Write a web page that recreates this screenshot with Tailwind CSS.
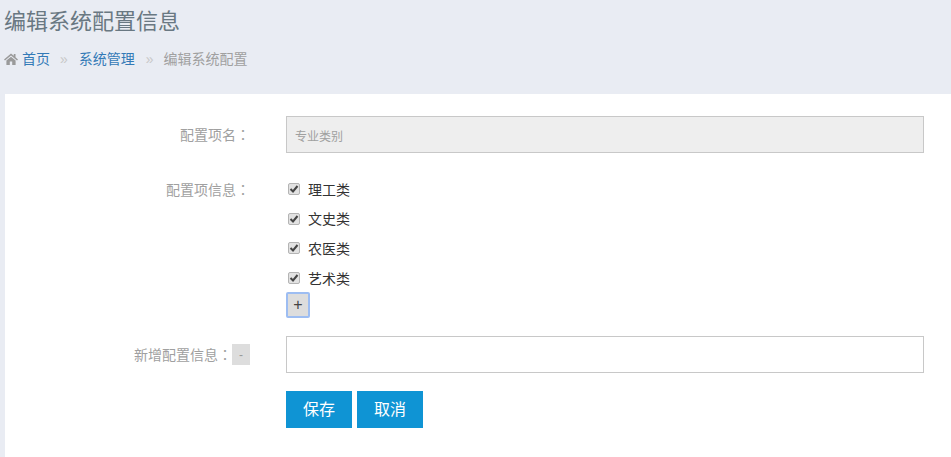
<!DOCTYPE html>
<html lang="zh-CN">
<head>
  <meta charset="UTF-8" />
  <title>编辑系统配置信息</title>
  <script src="https://cdn.jsdelivr.net/npm/@tailwindcss/browser@4"></script>
</head>
<body class="bg-[#e9ecf3] h-[457px] overflow-hidden font-['Liberation_Sans','Noto_Sans_CJK_SC',sans-serif] text-[14px]">
  <!-- Page header -->
  <div class="h-[94px] pl-[4px]">
    <h1 class="pt-[9px] text-[22px] leading-[26px] text-[#697882] font-normal">编辑系统配置信息</h1>
    <div class="flex items-center mt-[14px] h-[20px] leading-[20px]">
      <svg class="w-[14px] h-[12px] mr-[4px]" viewBox="0 0 14 12" fill="#9a9a9a"><path d="M7 0.5 L0 6.5 L1 7.5 L7 2.5 L13 7.5 L14 6.5 L11.5 4.3 V1 H9.8 V2.8 Z M2.4 7.5 V12 H5.8 V8.5 H8.2 V12 H11.6 V7.5 L7 3.7 Z"/></svg>
      <a href="#" class="text-[#337ab7]">首页</a>
      <span class="text-[#c8c8c8] ml-[10px] mr-[11px]">»</span>
      <a href="#" class="text-[#337ab7]">系统管理</a>
      <span class="text-[#c8c8c8] ml-[11px] mr-[10px]">»</span>
      <span class="text-[#a0a0a0]">编辑系统配置</span>
    </div>
  </div>
  <!-- Form card -->
  <div class="ml-[5px] bg-white h-[363px] pt-[22px]">
    <form>
      <div class="flex items-center">
        <label class="w-[245px] text-right text-[#a0a0a0]">配置项名<span lang="zh-TW" class="font-['Noto_Sans_CJK_TC']">：</span></label>
        <input type="text" disabled value="专业类别" class="ml-[36px] w-[638px] h-[37px] px-[8px] pt-[2px] text-[12px] bg-[#eeeeee] border border-[#c8c8c8] text-[#a0a0a0]" />
      </div>
      <div class="flex mt-[22px]">
        <label class="w-[245px] text-right text-[#a0a0a0] leading-[28px]">配置项信息<span lang="zh-TW" class="font-['Noto_Sans_CJK_TC']">：</span></label>
        <div class="ml-[36px]">
          <label class="flex items-center h-[29.6px] pl-[2px] text-[#333333]">
            <span class="flex items-center justify-center w-[12px] h-[12px] -mt-[1px] bg-[#e2e2e2] border border-[#b4b4b4] rounded-[2px]">
              <svg class="w-[10px] h-[10px]" viewBox="0 0 10 10" fill="none" stroke="#444444" stroke-width="2"><path d="M1.5 5 L4 7.5 L8.5 2"/></svg>
            </span>
            <span class="ml-[8px] pt-[1px]">理工类</span>
          </label>
          <label class="flex items-center h-[29.6px] pl-[2px] text-[#333333]">
            <span class="flex items-center justify-center w-[12px] h-[12px] -mt-[1px] bg-[#e2e2e2] border border-[#b4b4b4] rounded-[2px]">
              <svg class="w-[10px] h-[10px]" viewBox="0 0 10 10" fill="none" stroke="#444444" stroke-width="2"><path d="M1.5 5 L4 7.5 L8.5 2"/></svg>
            </span>
            <span class="ml-[8px] pt-[1px]">文史类</span>
          </label>
          <label class="flex items-center h-[29.6px] pl-[2px] text-[#333333]">
            <span class="flex items-center justify-center w-[12px] h-[12px] -mt-[1px] bg-[#e2e2e2] border border-[#b4b4b4] rounded-[2px]">
              <svg class="w-[10px] h-[10px]" viewBox="0 0 10 10" fill="none" stroke="#444444" stroke-width="2"><path d="M1.5 5 L4 7.5 L8.5 2"/></svg>
            </span>
            <span class="ml-[8px] pt-[1px]">农医类</span>
          </label>
          <label class="flex items-center h-[29.6px] pl-[2px] text-[#333333]">
            <span class="flex items-center justify-center w-[12px] h-[12px] -mt-[1px] bg-[#e2e2e2] border border-[#b4b4b4] rounded-[2px]">
              <svg class="w-[10px] h-[10px]" viewBox="0 0 10 10" fill="none" stroke="#444444" stroke-width="2"><path d="M1.5 5 L4 7.5 L8.5 2"/></svg>
            </span>
            <span class="ml-[8px] pt-[1px]">艺术类</span>
          </label>
          <button type="button" class="block w-[24px] h-[26px] -mt-[1px] bg-[#dddddd] border-2 border-[#9dbdf2] rounded-[2px] text-[16px] leading-[20px] text-[#444444]">+</button>
        </div>
      </div>
      <div class="flex items-center mt-[18px]">
        <div class="w-[245px] flex justify-end items-center text-[#a0a0a0]">
          <label>新增配置信息<span lang="zh-TW" class="font-['Noto_Sans_CJK_TC']">：</span></label>
          <button type="button" class="w-[18px] h-[21px] bg-[#dddddd] text-[#999999] text-[12px] leading-[23px]">-</button>
        </div>
        <input type="text" class="ml-[36px] w-[638px] h-[37px] bg-white border border-[#c8c8c8]" />
      </div>
      <div class="flex gap-[5px] ml-[281px] mt-[18px]">
        <button type="button" class="w-[66px] h-[37px] bg-[#0f94d4] text-white text-[16px]">保存</button>
        <button type="button" class="w-[66px] h-[37px] bg-[#0f94d4] text-white text-[16px]">取消</button>
      </div>
    </form>
  </div>
</body>
</html>
